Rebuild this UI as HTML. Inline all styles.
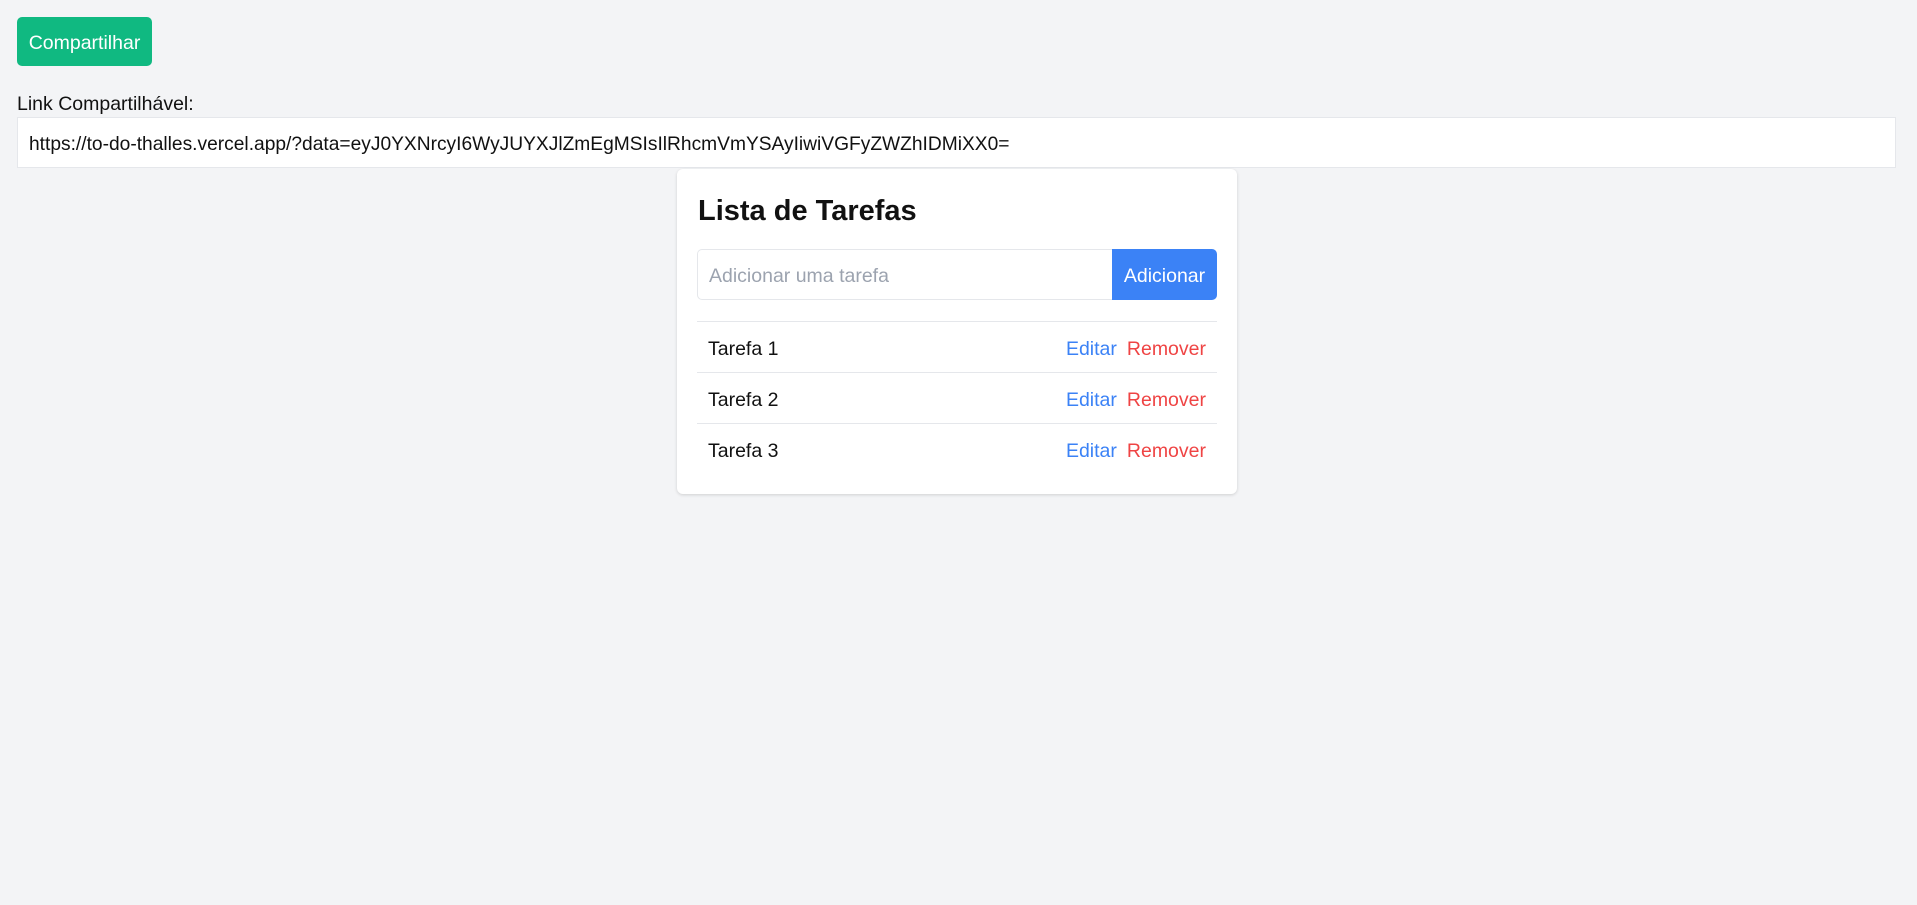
<!DOCTYPE html>
<html><head><meta charset="utf-8"><style>
*{box-sizing:border-box;margin:0;padding:0}
html,body{width:1917px;height:905px;background:#f3f4f6;font-family:"Liberation Sans",sans-serif;font-size:19.5px;color:#111;overflow:hidden}
.abs{position:absolute}
#share{left:17px;top:17px;width:135px;height:49px;background:#10b981;color:#fff;border-radius:5px;display:flex;align-items:center;justify-content:center;padding-top:3px}
#lbl{left:17px;top:92px;line-height:24px}
#link{left:17px;top:117px;width:1879px;height:51px;background:#fff;border:1px solid #e5e7eb;padding-left:11px;padding-top:4px;display:flex;align-items:center;white-space:nowrap;font-size:19.2px}
#card{left:677px;top:169px;width:560px;height:325px;background:#fff;border-radius:6px;box-shadow:0 1px 3px rgba(0,0,0,.15)}
#title{left:21px;top:24px;font-size:29px;font-weight:bold;line-height:36px}
#inp{left:20px;top:80px;width:416px;height:51px;border:1px solid #e5e7eb;border-right:none;border-radius:5px 0 0 5px;color:#9ca3af;padding-left:11px;padding-top:4px;display:flex;align-items:center}
#add{left:435px;top:80px;width:105px;height:51px;background:#3b82f6;color:#fff;border-radius:0 5px 5px 0;display:flex;align-items:center;justify-content:center;padding-top:4px}
.row{left:20px;width:520px;height:51px;border-top:1px solid #e5e7eb;display:flex;align-items:center;padding:4px 11px 0}
.row span.t{flex:1}
.e{color:#3b82f6;margin-right:10px}.r{color:#ef4444}
</style></head><body>
<div id="share" class="abs">Compartilhar</div>
<div id="lbl" class="abs">Link Compartilhável:</div>
<div id="link" class="abs">https://to-do-thalles.vercel.app/?data=eyJ0YXNrcyI6WyJUYXJlZmEgMSIsIlRhcmVmYSAyIiwiVGFyZWZhIDMiXX0=</div>
<div id="card" class="abs">
<div id="title" class="abs">Lista de Tarefas</div>
<div id="inp" class="abs">Adicionar uma tarefa</div>
<div id="add" class="abs">Adicionar</div>
<div class="row abs" style="top:152px"><span class="t">Tarefa 1</span><span class="e">Editar</span><span class="r">Remover</span></div>
<div class="row abs" style="top:203px"><span class="t">Tarefa 2</span><span class="e">Editar</span><span class="r">Remover</span></div>
<div class="row abs" style="top:254px"><span class="t">Tarefa 3</span><span class="e">Editar</span><span class="r">Remover</span></div>
</div>
</body></html>
